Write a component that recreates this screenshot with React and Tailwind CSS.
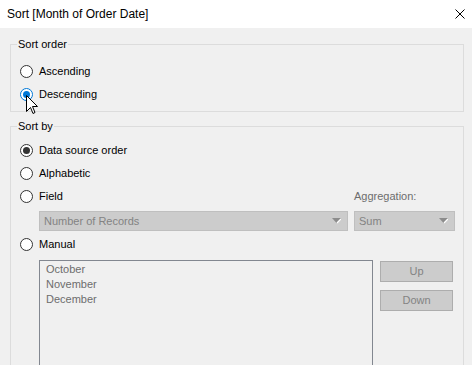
import { useState } from 'react';

const Radio = ({ checked, tone = 'dark' }) => {
  const ring = checked && tone === 'blue' ? 'border-[#0078d7]' : 'border-[#333333]';
  const dot = tone === 'blue' ? 'bg-[#0078d7]' : 'bg-[#333333]';
  return (
    <span className={`flex h-[13px] w-[13px] shrink-0 items-center justify-center rounded-full border bg-white ${ring}`}>
      {checked && <span className={`h-[7px] w-[7px] rounded-full ${dot}`} />}
    </span>
  );
};

const RadioRow = ({ label, checked, tone }) => (
  <div className="flex h-[23px] items-center gap-[6px]">
    <Radio checked={checked} tone={tone} />
    <span className="text-black">{label}</span>
  </div>
);

const Arrow = () => (
  <svg width="9" height="6" viewBox="0 0 9 6" className="shrink-0">
    <polygon points="0,0 9,0 4.5,5" fill="#8c8c8c" />
    <line x1="5" y1="5" x2="9" y2="1" stroke="#ffffff" strokeWidth="1.2" />
  </svg>
);

const Dropdown = ({ value, className = '' }) => (
  <div className={`flex h-[20px] items-center justify-between border border-[#bfbfbf] bg-[#cccccc] pl-[4px] pr-[6px] text-[#838383] ${className}`}>
    <span>{value}</span>
    <Arrow />
  </div>
);

const Button = ({ children }) => (
  <div className="flex h-[21px] w-[73px] items-center justify-center border border-[#adadad] bg-[#cccccc] text-[#838383]">
    {children}
  </div>
);

const Cursor = () => (
  <svg width="12" height="20" viewBox="0 0 12 20" className="absolute left-[26px] top-[95px]">
    <path
      d="M0.5 0.5 L0.5 16.5 L4.5 12.5 L7 18.5 L9 17.5 L6.5 11.5 L11.5 11.5 Z"
      fill="#ffffff"
      stroke="#000000"
      strokeWidth="1"
    />
  </svg>
);

export default function App() {
  const [order] = useState('Descending');
  const months = ['October', 'November', 'December'];

  return (
    <div
      className="relative h-[365px] w-[472px] overflow-hidden bg-[#f0f0f0] text-[11px] leading-[15px]"
      style={{ fontFamily: '"Liberation Sans", Arial, sans-serif' }}
    >
      {/* title bar */}
      <div className="flex h-[28px] items-center justify-between bg-white pl-[7px] pr-[6px]">
        <span className="text-[12px] text-black">Sort [Month of Order Date]</span>
        <svg width="10" height="10" viewBox="0 0 10 10" className="mr-[1px]">
          <path d="M0.5 0.5 L9.5 9.5 M9.5 0.5 L0.5 9.5" stroke="#000" strokeWidth="1" />
        </svg>
      </div>

      <div className="pl-[10px] pr-[8px] pt-[9px]">
        <fieldset className="border border-[#dcdcdc] pb-[5px] pl-[6px] pr-[8px]">
          <legend className="px-px text-black">Sort order</legend>
          <div className="pl-[3px] pt-[8px]">
            <RadioRow label="Ascending" checked={order === 'Ascending'} tone="blue" />
            <RadioRow label="Descending" checked={order === 'Descending'} tone="blue" />
          </div>
        </fieldset>

        <fieldset className="mt-[7px] border border-[#dcdcdc] pb-[20px] pl-[6px] pr-[8px]">
          <legend className="px-px text-black">Sort by</legend>
          <div className="pl-[3px] pt-[5px]">
            <RadioRow label="Data source order" checked />
            <RadioRow label="Alphabetic" />
            <div className="flex items-center">
              <div className="flex-1">
                <RadioRow label="Field" />
              </div>
              <span className="w-[101px] text-[#6d6d6d]">Aggregation:</span>
            </div>
            <div className="ml-[19px] mt-[3px] flex gap-[6px]">
              <Dropdown value="Number of Records" className="flex-1" />
              <Dropdown value="Sum" className="w-[101px]" />
            </div>
            <div className="mt-[2px]">
              <RadioRow label="Manual" />
            </div>
            <div className="ml-[19px] mt-[4px] flex gap-[7px]">
              <div className="h-[130px] w-[334px] border border-[#828790] pl-[6px] pt-[1px] text-[#6d6d6d]">
                {months.map((m) => (
                  <div key={m}>{m}</div>
                ))}
              </div>
              <div className="flex flex-col gap-[8px] pt-px">
                <Button>Up</Button>
                <Button>Down</Button>
              </div>
            </div>
          </div>
        </fieldset>
      </div>

      <Cursor />
    </div>
  );
}
